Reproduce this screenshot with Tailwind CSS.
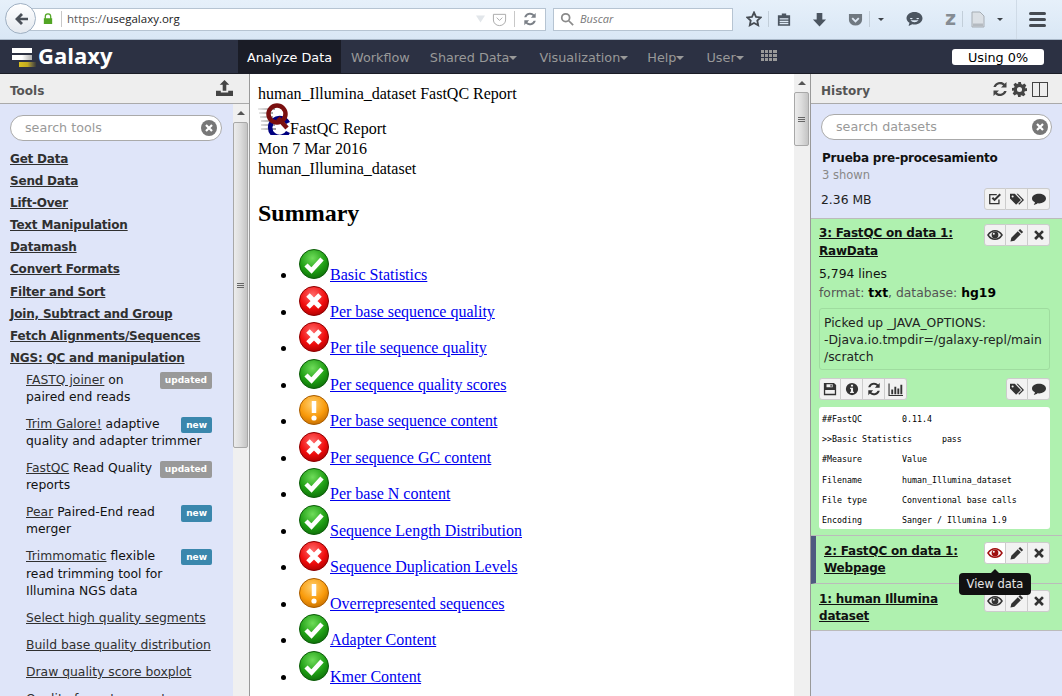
<!DOCTYPE html>
<html lang="en">
<head>
<meta charset="UTF-8">
<title>Galaxy</title>
<script src="https://cdn.jsdelivr.net/npm/@tailwindcss/browser@4"></script>
</head>
<body class="w-[1062px] h-[696px] overflow-hidden bg-white font-['DejaVu_Sans',sans-serif] text-[12.35px] text-[#222]">

<svg class="absolute w-0 h-0">
  <defs>
    <radialGradient id="g-ok" cx="45%" cy="30%" r="75%"><stop offset="0" stop-color="#6fdc5a"/><stop offset="0.6" stop-color="#1f9e14"/><stop offset="1" stop-color="#0c6a08"/></radialGradient>
    <radialGradient id="g-bad" cx="45%" cy="30%" r="75%"><stop offset="0" stop-color="#ff6a6a"/><stop offset="0.6" stop-color="#f00d0d"/><stop offset="1" stop-color="#a80000"/></radialGradient>
    <radialGradient id="g-warn" cx="45%" cy="30%" r="75%"><stop offset="0" stop-color="#ffd070"/><stop offset="0.6" stop-color="#f99a0a"/><stop offset="1" stop-color="#c06a00"/></radialGradient>
    <linearGradient id="g-line" gradientUnits="userSpaceOnUse" x1="0" x2="18" y1="0" y2="0"><stop offset="0" stop-color="#e4e4e4"/><stop offset="1" stop-color="#777"/></linearGradient>
  </defs>
  <symbol id="ok" viewBox="0 0 32 32"><circle cx="16" cy="16" r="14.500" fill="url(#g-ok)" stroke="#0d5c0a" stroke-width="1"/><path d="M8 17l5.500 5.500L24 11" fill="none" stroke="#fff" stroke-width="4.500"/></symbol>
  <symbol id="bad" viewBox="0 0 32 32"><circle cx="16" cy="16" r="14.500" fill="url(#g-bad)" stroke="#8c0000" stroke-width="1"/><path d="M10 10l12 12M22 10L10 22" fill="none" stroke="#fff" stroke-width="5"/></symbol>
  <symbol id="warn" viewBox="0 0 32 32"><circle cx="16" cy="16" r="14.500" fill="url(#g-warn)" stroke="#a85c00" stroke-width="1"/><path d="M16 7v12" stroke="#fff" stroke-width="4.500"/><circle cx="16" cy="24" r="2.600" fill="#fff"/></symbol>
  <symbol id="eye" viewBox="0 0 16 16"><path fill="none" stroke="currentColor" stroke-width="1.500" d="M1 8c1.800-2.800 4-4.300 7-4.300s5.200 1.500 7 4.300c-1.800 2.800-4 4.300-7 4.300S2.800 10.800 1 8z"/><circle cx="8" cy="8" r="3.400" fill="currentColor"/><circle cx="6.800" cy="6.800" r="1" fill="#f2f2f2"/></symbol>
  <symbol id="pencil" viewBox="0 0 16 16"><path d="M11.500 1l3.500 3.500-1.800 1.800-3.500-3.500zM8.900 3.600l3.500 3.500L5 14.500l-4.500 1 1-4.500z"/></symbol>
  <symbol id="close" viewBox="0 0 16 16"><path d="M4 1.500l4 4 4-4 2.500 2.500-4 4 4 4-2.500 2.500-4-4-4 4L1.500 12l4-4-4-4z"/></symbol>
  <symbol id="check" viewBox="0 0 16 16"><path fill="none" stroke="currentColor" stroke-width="1.500" d="M12.500 8.500v4.800h-10.500V3h8"/><path fill="none" stroke="currentColor" stroke-width="2.400" d="M5 6.500l2.500 2.500L14 2.500"/></symbol>
  <symbol id="tags" viewBox="0 0 16 16"><path d="M0 2h5.500l7 7-5.500 5.500-7-7zM3 4a1.200 1.200 0 1 0 0 2.400A1.200 1.200 0 0 0 3 4z" fill-rule="evenodd"/><path d="M7.500 2h1.500l7 7-5.500 5.500-1-1 4.500-4.500z"/></symbol>
  <symbol id="comment" viewBox="0 0 16 16"><path d="M8 2c4.200 0 8 2.200 8 5.500S12.200 13 8 13c-.6 0-1.200 0-1.700-.1C5.200 14 3.500 14.500 2 14.700c.7-.8 1.300-1.800 1.400-2.900C1.300 10.900 0 9.300 0 7.500 0 4.200 3.800 2 8 2z"/></symbol>
  <symbol id="save" viewBox="0 0 16 16"><path fill-rule="evenodd" d="M1 1h11.500L15 3.500V15H1zM4 2.500V6h7V2.500zM2.500 9v4.500h11V9z"/><path d="M8.500 3h1.500v2.500H8.500z"/></symbol>
  <symbol id="info" viewBox="0 0 16 16"><path fill-rule="evenodd" d="M8 1a7 7 0 1 1 0 14A7 7 0 0 1 8 1zM6.800 3v2.200h2.400V3zM5.800 6.500v1.400h1v3.200h-1v1.400h4.400v-1.400h-1V6.500z"/></symbol>
  <symbol id="refresh" viewBox="0 0 16 16"><path d="M14.500 1v5.500H9l2.100-2.100A4.500 4.500 0 0 0 3.800 6H1.400a6.800 6.800 0 0 1 11.300-3.200zM1.500 15V9.500H7l-2.100 2.100A4.500 4.500 0 0 0 12.200 10h2.400a6.800 6.800 0 0 1-11.300 3.200z"/></symbol>
  <symbol id="chart" viewBox="0 0 16 16"><path d="M.5 1.500h1.200v12.300H16V15H.5zM3.500 8h2v5h-2zM6.800 5h2v8h-2zM10 7h2v6h-2zM13.200 3h2v10h-2z"/></symbol>
  <symbol id="cog" viewBox="0 0 16 16"><path fill-rule="evenodd" d="M6.500 0h3l.4 2.200 1.400.6L13.200 1.500l2.100 2.100-1.300 1.900.6 1.400L16 6.500v3l-2.400.4-.6 1.400 1.300 1.900-2.100 2.100-1.900-1.300-1.400.6L9.500 16h-3l-.4-2.400-1.400-.6-1.900 1.300L.7 12.200 2 10.300l-.6-1.400L0 9.500v-3l2.200-.4.6-1.400L1.500 2.800 3.600.7l1.900 1.300 1.400-.6zM8 5.300a2.700 2.700 0 1 0 0 5.400 2.700 2.700 0 0 0 0-5.400z"/></symbol>
</svg>

<!-- firefox toolbar -->
<div class="relative h-10 flex items-center bg-gradient-to-b from-[#e6f0fa] to-[#d9e7f5] border-b border-[#a9b8c8]">
  <div class="absolute left-[5px] top-[3px] w-[31px] h-[31px] rounded-full bg-gradient-to-b from-white to-[#e4e9ef] border border-[#9fb0c2] flex items-center justify-center z-10">
    <svg viewBox="0 0 16 16" class="w-4 h-4 fill-[#4a5058]"><path d="M8 2l2 2-2.800 2.700H15v2.600H7.200L10 12l-2 2-6-6z"/></svg>
  </div>
  <div class="ml-5 w-[526px] h-[23px] -mt-[1px] bg-white border border-[#b6c4d2] flex items-center pl-[22px] pr-1 text-[11.500px] font-['Open_Sans',sans-serif]">
    <svg viewBox="0 0 12 14" class="w-[10px] h-[12px] fill-[#52a524] shrink-0"><path fill-rule="evenodd" d="M1 6h1V4a4 4 0 0 1 8 0v2h1v7H1zM3.500 6h5V4a2.500 2.500 0 0 0-5 0z"/></svg>
    <span class="ml-[8px] w-px h-4 bg-[#c8c8c8]"></span>
    <span class="ml-[5px] text-[#5b5b5b]">https://<span class="text-[#222]">usegalaxy.org</span></span>
    <svg viewBox="0 0 10 8" class="ml-auto w-[9px] h-[8px] fill-[#e2e6ea]"><path d="M0 0h10L5 8z"/></svg>
    <svg viewBox="0 0 16 16" class="ml-[7px] w-[15px] h-[15px] fill-none stroke-[#a8a8a8]"><path d="M1.500 2.500h13v6a6.500 6 0 0 1-13 0z"/><path d="M5 6l3 3 3-3"/></svg>
    <span class="ml-[7px] w-px h-4 bg-[#c8c8c8]"></span>
    <svg viewBox="0 0 16 16" class="ml-[8px] mr-[4px] w-[14px] h-[14px] fill-[#7b8087]"><use href="#refresh"/></svg>
  </div>
  <div class="ml-[7px] w-[180px] h-[23px] -mt-[1px] bg-white border border-[#b6c4d2] flex items-center pl-[6px] text-[11px] italic text-[#777] font-['Open_Sans',sans-serif]">
    <svg viewBox="0 0 16 16" class="w-[14px] h-[14px] fill-none stroke-[#8a8a8a] stroke-2"><circle cx="6.500" cy="6.500" r="4.500"/><path d="M10 10l5 5"/></svg>
    <span class="ml-[6px]">Buscar</span>
  </div>
  <div class="flex items-center h-full text-[#4b5560] -mt-[1px]">
    <svg viewBox="0 0 16 16" class="ml-[13px] w-4 h-4 fill-none stroke-[#454b52] stroke-[1.800]"><path d="M8 1.500l2 4.300 4.700.6-3.400 3.200.9 4.700L8 12l-4.200 2.300.9-4.700L1.300 6.400 6 5.800z"/></svg>
    <span class="ml-[6px] w-px h-4 bg-[#c2ced9]"></span>
    <svg viewBox="0 0 16 16" class="ml-[8px] w-[14px] h-[15px] fill-[#4b5560]"><path fill-rule="evenodd" d="M5.500 1h5v2H15v12H1V3h4.500zM3 6.500V8h10V6.500zM3 9.500V11h10V9.500zM3 12v1.500h10V12z"/></svg>
    <svg viewBox="0 0 16 16" class="ml-[21px] w-[15px] h-[15px] fill-[#4b5560]"><path d="M5 1h6v7h4l-7 7.500L1 8h4z"/></svg>
    <svg viewBox="0 0 16 16" class="ml-[21px] w-[15px] h-[15px] fill-[#6f7880]"><path d="M1 2h14v6.500a7 6 0 0 1-14 0z"/><path d="M4.500 6.500L8 10l3.500-3.500" fill="none" stroke="#dfe9f4" stroke-width="2"/></svg>
    <span class="ml-[6px] w-px h-4 bg-[#c2ced9]"></span>
    <span class="ml-[8px] w-0 h-0 border-x-[3px] border-x-transparent border-t-[3px] border-t-[#3c4248]"></span>
    <svg viewBox="0 0 16 16" class="ml-[22px] w-[17px] h-[16px] fill-[#4b5560]"><path fill-rule="evenodd" d="M8 1c4.400 0 8 2.700 8 6.200s-3.600 6.300-8 6.300c-.8 0-1.500-.1-2.200-.3L2 15l1-3.200C1.100 10.700 0 9 0 7.200 0 3.700 3.600 1 8 1zM3.500 7a1.300 1.300 0 0 0 2.600 0zM9.900 7a1.300 1.300 0 0 0 2.600 0zM4 9.300c1 1.300 2.400 1.900 4 1.900s3-.6 4-1.900z"/></svg>
    <span class="ml-[22px] font-bold text-[19px] leading-none text-[#858c93] -mt-[2px]">z</span>
    <span class="ml-[6px] w-px h-4 bg-[#c2ced9]"></span>
    <svg viewBox="0 0 14 16" class="ml-[8px] w-[14px] h-[17px]"><path d="M1 .5h8l4 4v11H1z" fill="#dbe0e5" stroke="#a6adb4"/><path d="M2 12h10v3H2z" fill="#b4bac0"/></svg>
    <span class="ml-[12px] w-0 h-0 border-x-[3px] border-x-transparent border-t-[3px] border-t-[#3c4248]"></span>
    <span class="h-10 w-px bg-[#cfdbe7] ml-[13px]"></span>
    <span class="ml-[12px] w-[17px] flex flex-col gap-[3px]">
      <span class="h-[3px] bg-[#454b52] rounded-sm"></span><span class="h-[3px] bg-[#454b52] rounded-sm"></span><span class="h-[3px] bg-[#454b52] rounded-sm"></span>
    </span>
  </div>
</div>

<!-- galaxy masthead -->
<div class="h-[34px] bg-[#2c3143] border-b border-[#1a1c26] flex items-stretch text-[12.800px] text-[#999]">
  <div class="w-[238px] flex items-center pl-3">
    <div class="w-[24px] flex flex-col items-start gap-[2px] mt-[2px]">
      <span class="h-[5px] w-[20px] bg-white"></span>
      <span class="h-[5px] w-[20px] bg-gradient-to-r from-white via-white to-[#b0b0b0]"></span>
      <span class="h-[5px] w-[17px] bg-gradient-to-r from-[#d8c020] via-[#c0aa20] to-[#3a3a38] ml-[7px]"></span>
    </div>
    <span class="ml-[2px] -mt-[3px] text-white font-bold text-[22px] leading-none font-['Open_Sans',sans-serif]">Galaxy</span>
  </div>
  <div class="w-[103px] bg-[#1a1c26] text-white flex items-center justify-center pt-[2px]">Analyze Data</div>
  <div class="ml-[10px] flex items-center pt-[2px]">Workflow</div>
  <div class="ml-[20px] flex items-center pt-[2px]">Shared Data<span class="w-0 h-0 border-x-4 border-x-transparent border-t-4 border-t-[#999]"></span></div>
  <div class="ml-[22px] flex items-center pt-[2px]">Visualization<span class="w-0 h-0 border-x-4 border-x-transparent border-t-4 border-t-[#999]"></span></div>
  <div class="ml-[19px] flex items-center pt-[2px]">Help<span class="w-0 h-0 border-x-4 border-x-transparent border-t-4 border-t-[#999]"></span></div>
  <div class="ml-[22px] flex items-center pt-[2px]">User<span class="w-0 h-0 border-x-4 border-x-transparent border-t-4 border-t-[#999]"></span></div>
  <div class="ml-[17px] flex items-center">
    <div class="grid grid-cols-4 gap-[1px] w-[16px] -mt-[3px]">
      <span class="h-[3px] bg-[#999]"></span><span class="h-[3px] bg-[#999]"></span><span class="h-[3px] bg-[#999]"></span><span class="h-[3px] bg-[#999]"></span>
      <span class="h-[3px] bg-[#999]"></span><span class="h-[3px] bg-[#999]"></span><span class="h-[3px] bg-[#999]"></span><span class="h-[3px] bg-[#999]"></span>
      <span class="h-[3px] bg-[#999]"></span><span class="h-[3px] bg-[#999]"></span><span class="h-[3px] bg-[#999]"></span><span class="h-[3px] bg-[#999]"></span>
    </div>
  </div>
  <div class="ml-auto mr-[18px] self-center w-[92px] h-4 bg-white rounded-[3px] text-black text-center text-[12.800px] leading-[17px]">Using 0%</div>
</div>

<div class="flex h-[622px]">
  <!-- tools -->
  <div class="w-[250px] shrink-0 flex flex-col bg-[#dfe5f9] border-r border-[#999] overflow-hidden">
    <div class="h-[30px] shrink-0 bg-[#eee] border-b border-[#aaa] flex items-center justify-between pl-[10px] pr-[16px] font-bold text-[#555] text-[12px]">
      <span class="mt-[5px]">Tools</span>
      <svg viewBox="0 0 16 16" class="w-[17px] h-[17px] fill-[#444] -mt-[2px]"><path d="M8 1l4.500 4.500H9.700V11H6.300V5.500H3.500zM0 11h4.500v1.800h7V11H16v5H0z"/></svg>
    </div>
    <div class="flex flex-1 min-h-0">
      <div class="w-[233px] shrink-0 relative">
        <div class="absolute left-[10px] top-[11px] w-[212px] h-[26px] bg-white border border-[#aaa] rounded-full flex items-center justify-between pl-[14px] pr-[4px] text-[#999] text-[12.700px]">
          search tools
          <svg viewBox="0 0 16 16" class="w-4 h-4"><circle cx="8" cy="8" r="8" fill="#777"/><path d="M5 5l6 6M11 5l-6 6" stroke="#fff" stroke-width="2.200"/></svg>
        </div>
        <div class="pt-[44px] pl-[10px] pr-[10px] font-bold text-[12px] tracking-[-0.2px] leading-[22.100px] text-[#303030]">
          <div class="underline">Get Data</div>
          <div class="underline">Send Data</div>
          <div class="underline">Lift-Over</div>
          <div class="underline">Text Manipulation</div>
          <div class="underline">Datamash</div>
          <div class="underline">Convert Formats</div>
          <div class="underline">Filter and Sort</div>
          <div class="underline">Join, Subtract and Group</div>
          <div class="underline">Fetch Alignments/Sequences</div>
          <div class="underline">NGS: QC and manipulation</div>
        </div>
        <div class="pl-[26px] pr-[21px] leading-[17.200px] text-[#111]">
          <div class="mt-[3px]"><span class="float-right ml-1 mt-[0px] px-[5px] h-[17px] leading-[17px] rounded-[2px] bg-[#999] text-white text-[9px] font-bold">updated</span><span class="underline text-[#303030]">FASTQ joiner</span> on paired end reads</div>
          <div class="mt-[9.700px]"><span class="float-right ml-1 mt-[1px] px-[5px] h-[16px] leading-[16px] rounded-[2px] bg-[#3a87ad] text-white text-[9px] font-bold">new</span><span class="underline text-[#303030]">Trim Galore!</span> adaptive quality and adapter trimmer</div>
          <div class="mt-[9.700px]"><span class="float-right ml-1 mt-[1px] px-[5px] h-[17px] leading-[17px] rounded-[2px] bg-[#999] text-white text-[9px] font-bold">updated</span><span class="underline text-[#303030]">FastQC</span> Read Quality reports</div>
          <div class="mt-[9.700px]"><span class="float-right ml-1 mt-[1px] px-[5px] h-[17px] leading-[17px] rounded-[2px] bg-[#3a87ad] text-white text-[9px] font-bold">new</span><span class="underline text-[#303030]">Pear</span> Paired-End read merger</div>
          <div class="mt-[9.700px]"><span class="float-right ml-1 mt-[1px] px-[5px] h-[16px] leading-[16px] rounded-[2px] bg-[#3a87ad] text-white text-[9px] font-bold">new</span><span class="underline text-[#303030]">Trimmomatic</span> flexible read trimming tool for Illumina NGS data</div>
          <div class="mt-[9.800px] underline text-[#303030] whitespace-nowrap">Select high quality segments</div>
          <div class="mt-[9.800px] underline text-[#303030] whitespace-nowrap">Build base quality distribution</div>
          <div class="mt-[10px] underline text-[#303030] whitespace-nowrap">Draw quality score boxplot</div>
          <div class="mt-[9.800px]"><span class="underline text-[#303030]">Quality format converter</span></div>
        </div>
      </div>
      <!-- tools scrollbar -->
      <div class="w-[16px] shrink-0 bg-[#f0f0f0] relative">
        <span class="absolute left-[4px] top-[7px] w-0 h-0 border-x-4 border-x-transparent border-b-4 border-b-[#555]"></span>
        <div class="absolute left-0 top-[18px] w-[15px] h-[326px] rounded-[2px] bg-gradient-to-r from-[#ececec] via-[#dcdcdc] to-[#c4c4c4] border border-[#a8a8a8] flex flex-col items-center justify-center gap-[1px]">
          <span class="w-[7px] h-px bg-[#666]"></span><span class="w-[7px] h-px bg-[#666]"></span><span class="w-[7px] h-px bg-[#666]"></span>
        </div>
      </div>
    </div>
  </div>

  <!-- center frame -->
  <div class="w-[561px] shrink-0 flex border-r border-[#999]">
    <div class="w-[544px] overflow-hidden pl-2 pt-[11px] font-['Liberation_Serif',serif] text-[16px] leading-[18.400px] text-black">
      <div>human_Illumina_dataset FastQC Report</div>
      <div class="flex items-end h-[35px]">
        <svg viewBox="0 0 32 32" class="w-[32px] h-[32px] mb-[3px]">
          <path d="M0 6h17M1 10h14M2 14h13M3 18h13M3 22h14M3 26h15" stroke="url(#g-line)" stroke-width="1.500" fill="none"/>
          <path d="M30 20a9.500 9.500 0 1 0 0 9" fill="none" stroke="#000080" stroke-width="4.500"/>
          <circle cx="19" cy="11" r="8.500" fill="none" stroke="#7a0f0f" stroke-width="4.500"/>
          <path d="M20 15l9 10" stroke="#7a0f0f" stroke-width="4.500"/>
        </svg>
        <span class="leading-[18px]">FastQC Report</span>
      </div>
      <div class="mt-[2px]">Mon 7 Mar 2016</div>
      <div class="mt-[1px]">human_Illumina_dataset</div>
      <h2 class="mt-[21px] text-[24px] leading-[28px] font-bold">Summary</h2>
      <ul class="list-disc marker:text-[18px] pl-10 mt-[21px] text-[16px] leading-[18.400px]">
        <li class="h-[36.500px] whitespace-nowrap"><svg class="inline w-[32px] h-[32px] align-baseline"><use href="#ok"/></svg><a class="underline text-[#0000ee]">Basic Statistics</a></li>
        <li class="h-[36.500px] whitespace-nowrap"><svg class="inline w-[32px] h-[32px] align-baseline"><use href="#bad"/></svg><a class="underline text-[#0000ee]">Per base sequence quality</a></li>
        <li class="h-[36.500px] whitespace-nowrap"><svg class="inline w-[32px] h-[32px] align-baseline"><use href="#bad"/></svg><a class="underline text-[#0000ee]">Per tile sequence quality</a></li>
        <li class="h-[36.500px] whitespace-nowrap"><svg class="inline w-[32px] h-[32px] align-baseline"><use href="#ok"/></svg><a class="underline text-[#0000ee]">Per sequence quality scores</a></li>
        <li class="h-[36.500px] whitespace-nowrap"><svg class="inline w-[32px] h-[32px] align-baseline"><use href="#warn"/></svg><a class="underline text-[#0000ee]">Per base sequence content</a></li>
        <li class="h-[36.500px] whitespace-nowrap"><svg class="inline w-[32px] h-[32px] align-baseline"><use href="#bad"/></svg><a class="underline text-[#0000ee]">Per sequence GC content</a></li>
        <li class="h-[36.500px] whitespace-nowrap"><svg class="inline w-[32px] h-[32px] align-baseline"><use href="#ok"/></svg><a class="underline text-[#0000ee]">Per base N content</a></li>
        <li class="h-[36.500px] whitespace-nowrap"><svg class="inline w-[32px] h-[32px] align-baseline"><use href="#ok"/></svg><a class="underline text-[#0000ee]">Sequence Length Distribution</a></li>
        <li class="h-[36.500px] whitespace-nowrap"><svg class="inline w-[32px] h-[32px] align-baseline"><use href="#bad"/></svg><a class="underline text-[#0000ee]">Sequence Duplication Levels</a></li>
        <li class="h-[36.500px] whitespace-nowrap"><svg class="inline w-[32px] h-[32px] align-baseline"><use href="#warn"/></svg><a class="underline text-[#0000ee]">Overrepresented sequences</a></li>
        <li class="h-[36.500px] whitespace-nowrap"><svg class="inline w-[32px] h-[32px] align-baseline"><use href="#ok"/></svg><a class="underline text-[#0000ee]">Adapter Content</a></li>
        <li class="h-[36.500px] whitespace-nowrap"><svg class="inline w-[32px] h-[32px] align-baseline"><use href="#ok"/></svg><a class="underline text-[#0000ee]">Kmer Content</a></li>
      </ul>
    </div>
    <!-- center scrollbar -->
    <div class="w-[16px] shrink-0 bg-[#f0f0f0] relative">
      <span class="absolute left-[4px] top-[7px] w-0 h-0 border-x-4 border-x-transparent border-b-4 border-b-[#555]"></span>
      <div class="absolute left-0 top-[18px] w-[15px] h-[54px] rounded-[2px] bg-gradient-to-r from-[#ececec] via-[#dcdcdc] to-[#c4c4c4] border border-[#a8a8a8] flex flex-col items-center justify-center gap-[1px]">
        <span class="w-[7px] h-px bg-[#666]"></span><span class="w-[7px] h-px bg-[#666]"></span><span class="w-[7px] h-px bg-[#666]"></span>
      </div>
    </div>
  </div>

  <!-- history -->
  <div class="flex-1 flex flex-col bg-[#dfe5f9] relative">
    <div class="h-[30px] shrink-0 bg-[#eee] border-b border-[#aaa] flex items-center pl-[10px] pr-[14px] font-bold text-[#555] text-[12px]">
      <span class="mt-[5px]">History</span>
      <svg viewBox="0 0 16 16" class="ml-auto w-4 h-4 fill-[#444] mt-px"><use href="#refresh"/></svg>
      <svg viewBox="0 0 16 16" class="ml-[4px] w-[15px] h-[15px] fill-[#444] mt-px"><use href="#cog"/></svg>
      <span class="ml-[5px] w-[16px] h-[15px] border border-[#444] relative mt-px"><span class="absolute left-[6px] top-0 bottom-0 w-px bg-[#444]"></span></span>
    </div>
    <div class="mx-[10px] mt-[10px] h-[26px] bg-white border border-[#aaa] rounded-full flex items-center justify-between pl-[14px] pr-[3px] text-[#999] text-[12.700px] shrink-0">
      search datasets
      <svg viewBox="0 0 16 16" class="w-4 h-4"><circle cx="8" cy="8" r="8" fill="#777"/><path d="M5 5l6 6M11 5l-6 6" stroke="#fff" stroke-width="2.200"/></svg>
    </div>
    <div class="pl-[11px] mt-[10px] font-bold text-[12px] tracking-[-0.2px] leading-[17px] text-[#111]">Prueba pre-procesamiento</div>
    <div class="pl-[11px] text-[11.500px] leading-[17px] text-[#888]">3 shown</div>
    <div class="pl-[10px] pr-[12px] mt-[4px] flex justify-between items-center h-[22px]">
      <span class="text-[12.350px] mt-[2px]">2.36 MB</span>
      <div class="flex">
        <span class="w-[22px] h-[22px] bg-[#f2f2f2] border border-[#ccc] rounded-l-[3px] flex items-center justify-center"><svg viewBox="0 0 16 16" class="w-[14px] h-[14px] text-[#333]"><use href="#check"/></svg></span>
        <span class="w-[22px] h-[22px] bg-[#f2f2f2] border border-l-0 border-[#ccc] flex items-center justify-center"><svg viewBox="0 0 16 16" class="w-[14px] h-[14px] fill-[#333]"><use href="#tags"/></svg></span>
        <span class="w-[22px] h-[22px] bg-[#f2f2f2] border border-l-0 border-[#ccc] rounded-r-[3px] flex items-center justify-center"><svg viewBox="0 0 16 16" class="w-[14px] h-[14px] fill-[#333]"><use href="#comment"/></svg></span>
      </div>
    </div>

    <!-- dataset 3 -->
    <div class="mt-[8px] bg-[#aff1af] border-y border-[#bbb] pl-2 pr-[12px] pt-[5px] h-[318px]">
      <div class="flex justify-between">
        <div class="w-[150px] font-bold text-[12px] tracking-[-0.2px] leading-[18px] underline text-[#111]">3: FastQC on data 1: RawData</div>
        <div class="flex h-[22px]">
          <span class="w-[22px] h-[22px] bg-[#f2f2f2] border border-[#ccc] rounded-l-[3px] flex items-center justify-center"><svg viewBox="0 0 16 16" class="w-[16px] h-[16px] text-[#333]"><use href="#eye"/></svg></span>
          <span class="w-[22px] h-[22px] bg-[#f2f2f2] border border-l-0 border-[#ccc] flex items-center justify-center"><svg viewBox="0 0 16 16" class="w-[14px] h-[14px] fill-[#333]"><use href="#pencil"/></svg></span>
          <span class="w-[22px] h-[22px] bg-[#f2f2f2] border border-l-0 border-[#ccc] rounded-r-[3px] flex items-center justify-center"><svg viewBox="0 0 16 16" class="w-[12px] h-[12px] fill-[#333]"><use href="#close"/></svg></span>
        </div>
      </div>
      <div class="mt-[5px] leading-[19px] text-[#111]">5,794 lines</div>
      <div class="leading-[19px] text-[#555]">format: <b class="text-black">txt</b>, database: <b class="text-black">hg19</b></div>
      <div class="mt-[5px] h-[62px] border border-[#9fdc9f] rounded-[3px] pl-[4px] pt-[6px] leading-[17px] text-[#222] whitespace-pre">Picked up _JAVA_OPTIONS:
-Djava.io.tmpdir=/galaxy-repl/main
/scratch</div>
      <div class="mt-[8px] flex justify-between h-[22px]">
        <div class="flex">
          <span class="w-[22px] h-[22px] bg-[#f2f2f2] border border-[#ccc] rounded-l-[3px] flex items-center justify-center"><svg viewBox="0 0 16 16" class="w-[14px] h-[14px] fill-[#333]"><use href="#save"/></svg></span>
          <span class="w-[22px] h-[22px] bg-[#f2f2f2] border border-l-0 border-[#ccc] flex items-center justify-center"><svg viewBox="0 0 16 16" class="w-[14px] h-[14px] fill-[#333]"><use href="#info"/></svg></span>
          <span class="w-[22px] h-[22px] bg-[#f2f2f2] border border-l-0 border-[#ccc] flex items-center justify-center"><svg viewBox="0 0 16 16" class="w-[14px] h-[14px] fill-[#333]"><use href="#refresh"/></svg></span>
          <span class="w-[22px] h-[22px] bg-[#f2f2f2] border border-l-0 border-[#ccc] rounded-r-[3px] flex items-center justify-center"><svg viewBox="0 0 16 16" class="w-[15px] h-[15px] fill-[#333]"><use href="#chart"/></svg></span>
        </div>
        <div class="flex">
          <span class="w-[22px] h-[22px] bg-[#f2f2f2] border border-[#ccc] rounded-l-[3px] flex items-center justify-center"><svg viewBox="0 0 16 16" class="w-[14px] h-[14px] fill-[#333]"><use href="#tags"/></svg></span>
          <span class="w-[22px] h-[22px] bg-[#f2f2f2] border border-l-0 border-[#ccc] rounded-r-[3px] flex items-center justify-center"><svg viewBox="0 0 16 16" class="w-[14px] h-[14px] fill-[#333]"><use href="#comment"/></svg></span>
        </div>
      </div>
      <div class="mt-[7px] h-[122px] bg-white rounded-[3px] pl-[3px] pt-[2px] font-['DejaVu_Sans_Mono',monospace] text-[8.300px] leading-[20.200px] whitespace-pre text-black">##FastQC        0.11.4
&gt;&gt;Basic Statistics      pass
#Measure        Value
Filename        human_Illumina_dataset
File type       Conventional base calls
Encoding        Sanger / Illumina 1.9</div>
    </div>

    <!-- dataset 2 -->
    <div class="h-[48px] bg-[#aff1af] border-b border-[#bbb] border-l-[5px] border-l-[#4f5a80] pl-2 pr-[12px] pt-[6px] flex justify-between">
      <div class="w-[150px] mt-px font-bold text-[12px] tracking-[-0.2px] leading-[17px] underline text-[#111]">2: FastQC on data 1: Webpage</div>
      <div class="flex h-[22px]">
        <span class="w-[22px] h-[22px] bg-white border border-[#ccc] rounded-l-[3px] flex items-center justify-center"><svg viewBox="0 0 16 16" class="w-[16px] h-[16px] text-[#a01010]"><use href="#eye"/></svg></span>
        <span class="w-[22px] h-[22px] bg-[#f2f2f2] border border-l-0 border-[#ccc] flex items-center justify-center"><svg viewBox="0 0 16 16" class="w-[14px] h-[14px] fill-[#333]"><use href="#pencil"/></svg></span>
        <span class="w-[22px] h-[22px] bg-[#f2f2f2] border border-l-0 border-[#ccc] rounded-r-[3px] flex items-center justify-center"><svg viewBox="0 0 16 16" class="w-[12px] h-[12px] fill-[#333]"><use href="#close"/></svg></span>
      </div>
    </div>

    <!-- dataset 1 -->
    <div class="h-[47px] bg-[#aff1af] border-b border-[#bbb] pl-2 pr-[12px] pt-[6px] flex justify-between">
      <div class="w-[150px] mt-px font-bold text-[12px] tracking-[-0.2px] leading-[17px] underline text-[#111]">1: human Illumina dataset</div>
      <div class="flex h-[22px]">
        <span class="w-[22px] h-[22px] bg-[#f2f2f2] border border-[#ccc] rounded-l-[3px] flex items-center justify-center"><svg viewBox="0 0 16 16" class="w-[16px] h-[16px] text-[#333]"><use href="#eye"/></svg></span>
        <span class="w-[22px] h-[22px] bg-[#f2f2f2] border border-l-0 border-[#ccc] flex items-center justify-center"><svg viewBox="0 0 16 16" class="w-[14px] h-[14px] fill-[#333]"><use href="#pencil"/></svg></span>
        <span class="w-[22px] h-[22px] bg-[#f2f2f2] border border-l-0 border-[#ccc] rounded-r-[3px] flex items-center justify-center"><svg viewBox="0 0 16 16" class="w-[12px] h-[12px] fill-[#333]"><use href="#close"/></svg></span>
      </div>
    </div>

    <!-- tooltip over dataset 2 -->
    <div class="absolute left-[148px] top-[499px] w-[72px] h-[22px] bg-[#111] text-white/90 rounded-[4px] text-[11.500px] leading-[22px] text-center">View data
      <span class="absolute left-[32px] -top-[4px] w-0 h-0 border-x-4 border-x-transparent border-b-4 border-b-[#111]"></span>
    </div>
  </div>
</div>
</body>
</html>
